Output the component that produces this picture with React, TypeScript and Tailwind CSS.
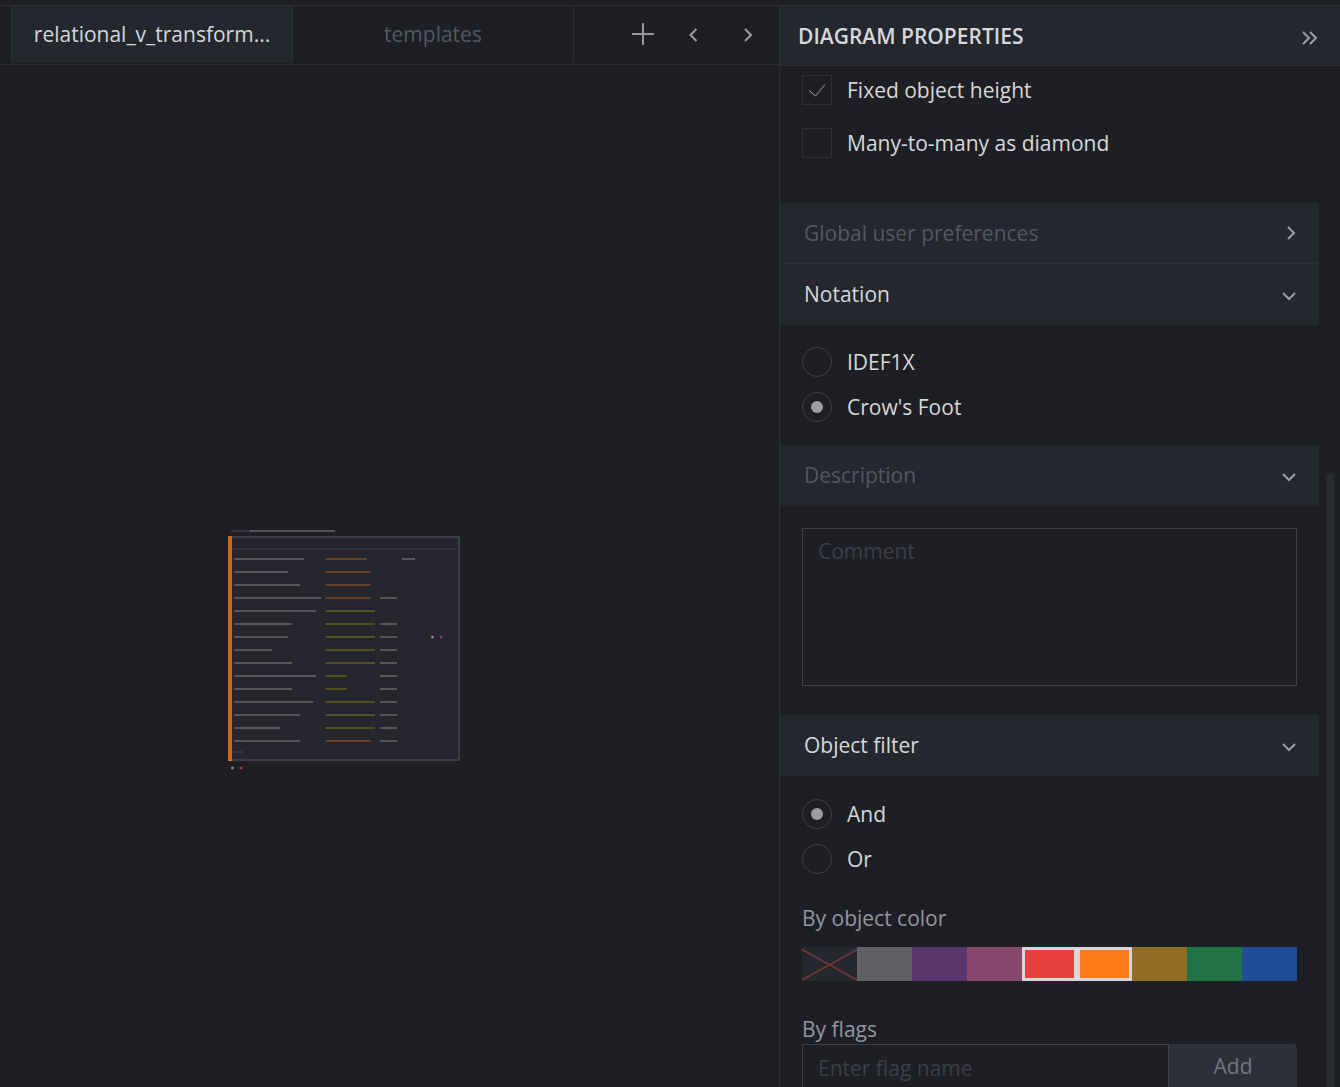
import { useState, type ReactNode } from 'react'

type Row = { name: number; type: number; typeKind: 'key' | 'value'; flag?: [number, number] }

const ROWS: Row[] = [
  { name: 70, type: 42, typeKind: 'key', flag: [182, 13] },
  { name: 54, type: 46, typeKind: 'key' },
  { name: 66, type: 46, typeKind: 'key' },
  { name: 87, type: 46, typeKind: 'key', flag: [160, 17] },
  { name: 82, type: 50, typeKind: 'value' },
  { name: 58, type: 50, typeKind: 'value', flag: [160, 17] },
  { name: 54, type: 50, typeKind: 'value', flag: [160, 17] },
  { name: 38, type: 50, typeKind: 'value', flag: [160, 17] },
  { name: 58, type: 50, typeKind: 'value', flag: [160, 17] },
  { name: 82, type: 22, typeKind: 'value', flag: [160, 17] },
  { name: 58, type: 22, typeKind: 'value', flag: [160, 17] },
  { name: 79, type: 50, typeKind: 'value', flag: [160, 17] },
  { name: 66, type: 50, typeKind: 'value', flag: [160, 17] },
  { name: 46, type: 50, typeKind: 'value', flag: [160, 17] },
  { name: 66, type: 46, typeKind: 'key', flag: [160, 17] },
]

const TYPE_FILL = { key: '#633f27', value: '#535020' }

const COLORS = [
  { name: 'None', bg: 'bg-[#24272e]' },
  { name: 'Gray', bg: 'bg-[#606164]' },
  { name: 'Purple', bg: 'bg-[#5b356d]' },
  { name: 'Pink', bg: 'bg-[#87486e]' },
  { name: 'Red', bg: 'bg-[#e73f3f]' },
  { name: 'Orange', bg: 'bg-[#fe7c18]' },
  { name: 'Yellow', bg: 'bg-[#906e24]' },
  { name: 'Green', bg: 'bg-[#217346]' },
  { name: 'Blue', bg: 'bg-[#214d97]' },
]

const CHEVRONS = {
  left: { w: 10, h: 14, d: 'M8.5 1 L2.5 7 L8.5 13' },
  right: { w: 10, h: 14, d: 'M2 1 L8 7 L2 13' },
  down: { w: 14, h: 10, d: 'M1 2 L7 8 L13 2' },
  double: { w: 16, h: 14, d: 'M2 1 L8 7 L2 13 M9 1 L15 7 L9 13' },
}

function Chevron({ kind }: { kind: keyof typeof CHEVRONS }) {
  const { w, h, d } = CHEVRONS[kind]
  return (
    <svg width={w} height={h} viewBox={`0 0 ${w} ${h}`} fill="none" stroke="#9c9da4" strokeWidth="2" aria-hidden="true">
      <path d={d} />
    </svg>
  )
}

function EntityThumbnail() {
  return (
    <svg width="250" height="260" viewBox="0 0 250 260" className="absolute top-[455px] left-[220px]">
      <rect x="11" y="10" width="17" height="2" fill="#383a40" />
      <rect x="29" y="10" width="86" height="2" fill="#505155" />
      <rect x="9" y="17" width="230" height="223" fill="#25252d" stroke="#3b3d46" strokeWidth="2" />
      <rect x="12" y="28" width="224" height="2" fill="#31323a" />
      <rect x="8" y="16" width="4" height="225" fill="#d06a1a" />
      {ROWS.map((row, i) => {
        const y = 38 + i * 13
        return (
          <g key={i}>
            <rect x="14.5" y={y} width={row.name - 0.5} height="2" fill="#56575c" />
            <rect x="105.5" y={y} width={row.type - 0.5} height="2" fill={TYPE_FILL[row.typeKind]} />
            {row.flag && <rect x={row.flag[0]} y={y} width={row.flag[1]} height="2" fill="#56575c" />}
          </g>
        )
      })}
      <path d="M14 232 H23" stroke="#3d3e46" strokeWidth="2" strokeDasharray="2 1" />
      <circle cx="212.5" cy="117" r="1.5" fill="#88898c" />
      <circle cx="221" cy="117" r="1.5" fill="#7b3e96" />
      <circle cx="12.5" cy="248" r="1.5" fill="#88898c" />
      <circle cx="21" cy="248" r="1.5" fill="#b03a3a" />
    </svg>
  )
}

function Checkbox({ label, defaultChecked }: { label: string; defaultChecked?: boolean }) {
  return (
    <label className="flex h-[30px] items-center gap-[15px]">
      <span className="relative size-[30px]">
        <input
          type="checkbox"
          defaultChecked={defaultChecked}
          className="peer block size-[30px] appearance-none border border-[#2e3038]"
        />
        <svg
          viewBox="0 0 30 30"
          fill="none"
          stroke="#9c9da4"
          className="pointer-events-none absolute inset-0 hidden peer-checked:block"
        >
          <path d="M7 15.5 L13.5 21 L23 9.5" />
        </svg>
      </span>
      {label}
    </label>
  )
}

function Radio({ name, label, defaultChecked }: { name: string; label: string; defaultChecked?: boolean }) {
  return (
    <label className="flex h-[30px] items-center gap-[15px]">
      <input
        type="radio"
        name={name}
        defaultChecked={defaultChecked}
        className="grid size-[30px] appearance-none place-content-center rounded-full border border-[#3e414c] before:size-3 before:rounded-full checked:before:bg-[#9c9da2]"
      />
      {label}
    </label>
  )
}

function SectionHeader({ title, muted, closed }: { title: string; muted?: boolean; closed?: boolean }) {
  return (
    <h3>
      <button
        type="button"
        aria-expanded={!closed}
        className={`flex h-[61px] w-full items-center justify-between border-b bg-[#24272e] pr-[23px] pl-6 ${
          muted ? 'text-[#535764]' : ''
        } ${closed ? 'border-[#2c2f36]' : 'border-[#24272e]'}`}
      >
        {title}
        <span className={closed ? '' : 'pt-1'}>
          <Chevron kind={closed ? 'right' : 'down'} />
        </span>
      </button>
    </h3>
  )
}

function ColorFilter() {
  const [selected, setSelected] = useState(['Red', 'Orange'])

  const toggle = (name: string) =>
    setSelected(prev => (prev.includes(name) ? prev.filter(n => n !== name) : [...prev, name]))

  return (
    <div className="grid h-[34px] grid-cols-9">
      {COLORS.map(c => (
        <button
          key={c.name}
          type="button"
          aria-label={c.name}
          aria-pressed={selected.includes(c.name)}
          onClick={() => toggle(c.name)}
          className={`h-full ${c.bg} ${selected.includes(c.name) ? 'border-3 border-[#d5d7da]' : ''}`}
        >
          {c.name === 'None' && (
            <svg viewBox="0 0 55 34" preserveAspectRatio="none" className="size-full" stroke="#763638" strokeWidth="1.6">
              <path d="M0 2.5 L55 33 M0 33 L55 2.5" />
            </svg>
          )}
        </button>
      ))}
    </div>
  )
}

function Tab({ active, children }: { active?: boolean; children: ReactNode }) {
  return (
    <button
      type="button"
      role="tab"
      aria-selected={!!active}
      className={`h-[57px] min-w-0 max-w-[281px] flex-1 truncate border-r border-[#2c2f38] px-5 pb-0.5 ${
        active ? 'bg-[#24272e]' : 'text-[#535764]'
      }`}
    >
      {children}
    </button>
  )
}

function Workspace() {
  return (
    <main className="flex min-w-0 flex-1 flex-col">
      <div className="flex h-[59px] justify-between border-b border-[#2c2f38] pl-[11px]">
        <div role="tablist" className="flex min-w-0 flex-1">
          <div className="h-[57px] w-px bg-[#2c2f38]" />
          <Tab active>relational_v_transform...</Tab>
          <Tab>templates</Tab>
        </div>
        <div className="flex h-[57px] items-center pr-[9px]">
          <button type="button" aria-label="New diagram" className="mr-[6px] grid w-11 place-items-center pb-0.5">
            <svg width="22" height="22" viewBox="0 0 22 22" stroke="#9496a0" strokeWidth="2" aria-hidden="true">
              <path d="M11 0 V22 M0 11 H22" />
            </svg>
          </button>
          <button type="button" aria-label="Previous tab" className="mr-[11px] grid w-11 place-items-center">
            <Chevron kind="left" />
          </button>
          <button type="button" aria-label="Next tab" className="grid w-11 place-items-center">
            <Chevron kind="right" />
          </button>
        </div>
      </div>
      <div className="relative flex-1 overflow-hidden">
        <EntityThumbnail />
      </div>
    </main>
  )
}

function PropertiesPanel() {
  return (
    <aside className="flex w-[561px] shrink-0 flex-col border-l border-[#2c2f38]">
      <div className="flex h-[60px] shrink-0 items-center justify-between border-b border-[#2f3138] bg-[#24272e] pr-[23px] pl-[18px]">
        <h2 className="font-semibold">DIAGRAM PROPERTIES</h2>
        <button type="button" aria-label="Collapse panel" className="pt-1">
          <Chevron kind="double" />
        </button>
      </div>

      <div className="flex min-h-0 flex-1">
        <div className="min-w-0 flex-1 overflow-hidden">
          <div className="flex flex-col gap-[23px] px-[22px] pt-[9px] pb-[45px]">
            <Checkbox label="Fixed object height" defaultChecked />
            <Checkbox label="Many-to-many as diamond" />
          </div>

          <SectionHeader title="Global user preferences" muted closed />

          <SectionHeader title="Notation" />
          <div className="flex flex-col gap-[15px] px-[22px] pt-[22px] pb-[23px]">
            <Radio name="notation" label="IDEF1X" />
            <Radio name="notation" label="Crow's Foot" defaultChecked />
          </div>

          <SectionHeader title="Description" muted />
          <div className="px-[22px] pt-[22px] pb-[29px]">
            <textarea
              aria-label="Comment"
              placeholder="Comment"
              className="block h-[158px] w-full resize-none border border-[#3d414c] bg-transparent px-[15px] py-[7px] placeholder:text-[#3a3e4a]"
            />
          </div>

          <SectionHeader title="Object filter" />
          <div className="px-[22px] pt-[23px]">
            <div className="flex flex-col gap-[15px]">
              <Radio name="filter-mode" label="And" defaultChecked />
              <Radio name="filter-mode" label="Or" />
            </div>
            <h4 className="mt-[29px] mb-[14px] text-[#9295a0]">By object color</h4>
            <ColorFilter />
            <label htmlFor="flag-name" className="mt-[33px] block text-[#9295a0]">
              By flags
            </label>
            <div className="flex h-12">
              <input
                id="flag-name"
                placeholder="Enter flag name"
                className="min-w-0 flex-1 border border-[#3d414c] bg-transparent px-[15px] placeholder:text-[#3a3e4a]"
              />
              <button type="button" className="w-32 rounded-r-sm bg-[#2d2f3a] pb-1 text-[#74777c]">
                Add
              </button>
            </div>
          </div>
        </div>

        <div className="flex w-[21px] shrink-0 flex-col pr-[6px] pl-[7px] pt-[408px]">
          <div className="flex-1 bg-[#282a32]" />
        </div>
      </div>
    </aside>
  )
}

export default function App() {
  return (
    <div className="flex h-screen flex-col overflow-hidden bg-[#1e1f24] pt-[5px] font-['Open_Sans',sans-serif] text-[21px] leading-[30px] text-[#d5d7da]">
      <div className="flex min-h-0 flex-1 border-t border-[#2c2f38]">
        <Workspace />
        <PropertiesPanel />
      </div>
    </div>
  )
}
